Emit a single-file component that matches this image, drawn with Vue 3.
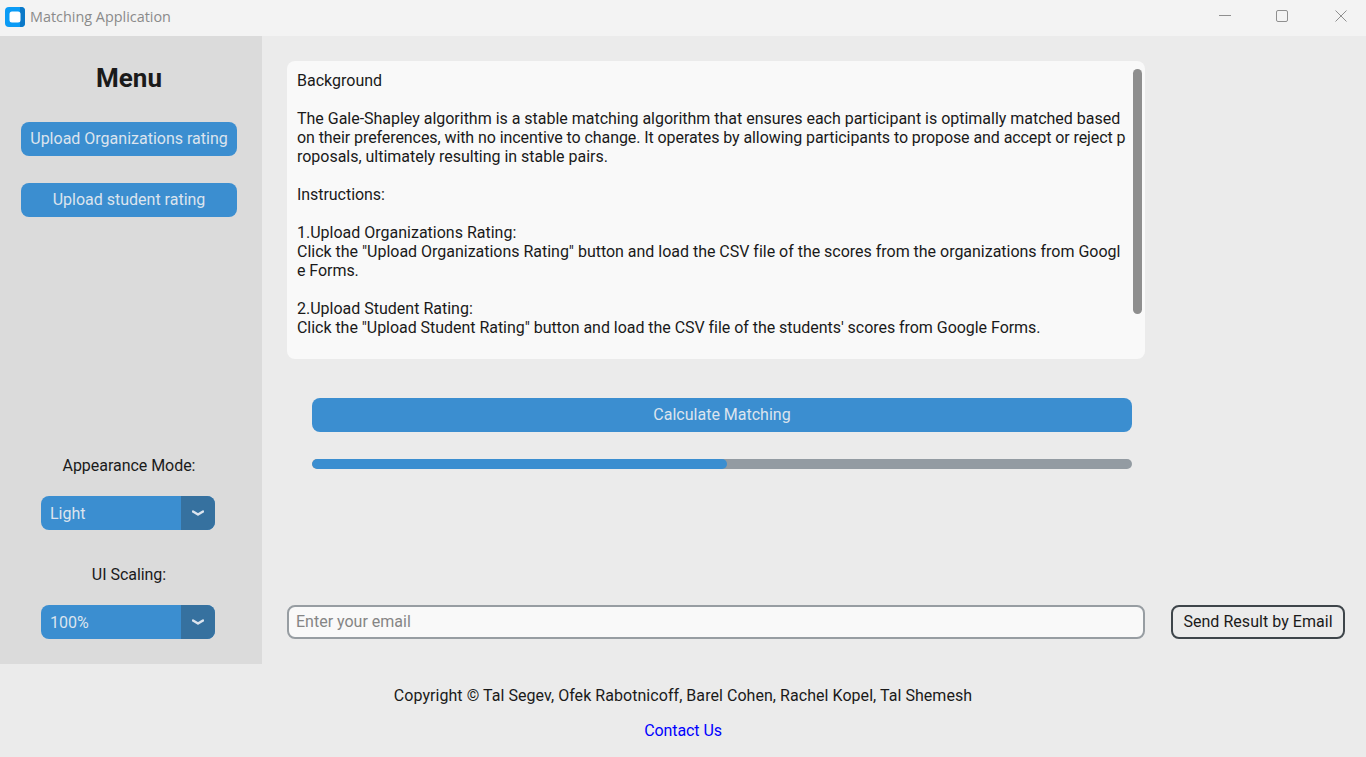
<script setup>
const lines = [
  { text: 'Background', spacing: 0 },
  { text: '', spacing: 0 },
  { text: 'The Gale-Shapley algorithm is a stable matching algorithm that ensures each participant is optimally matched based', spacing: -0.017 },
  { text: 'on their preferences, with no incentive to change. It operates by allowing participants to propose and accept or reject p', spacing: -0.078 },
  { text: 'roposals, ultimately resulting in stable pairs.', spacing: -0.02 },
  { text: '', spacing: 0 },
  { text: 'Instructions:', spacing: -0.05 },
  { text: '', spacing: 0 },
  { text: '1.Upload Organizations Rating:', spacing: 0 },
  { text: 'Click the "Upload Organizations Rating" button and load the CSV file of the scores from the organizations from Googl', spacing: -0.017 },
  { text: 'e Forms.', spacing: -0.05 },
  { text: '', spacing: 0 },
  { text: '2.Upload Student Rating:', spacing: 0 },
  { text: 'Click the "Upload Student Rating" button and load the CSV file of the students\' scores from Google Forms.', spacing: -0.04 },
]
const menus = [
  { label: 'Appearance Mode:', value: 'Light' },
  { label: 'UI Scaling:', value: '100%' },
]
</script>

<template>
  <div class="window">
    <header class="titlebar">
      <svg class="logo" width="20" height="20" viewBox="0 0 20 20">
        <rect width="20" height="20" rx="4" fill="#0a9bf5" />
        <path d="M15 0h1a4 4 0 0 1 4 4v12a4 4 0 0 1-4 4h-1z" fill="#0a78c8" />
        <rect x="4.500" y="4.500" width="11" height="11" rx="2.500" fill="#fff" />
      </svg>
      <span class="app-title">Matching Application</span>
      <div class="controls">
        <svg width="12" height="12" viewBox="0 0 12 12"><path d="M0 5.500h12" stroke="#8f8f8f" fill="none" /></svg>
        <svg width="12" height="12" viewBox="0 0 12 12"><rect x=".5" y=".5" width="11" height="11" rx="1.500" stroke="#8f8f8f" fill="none" /></svg>
        <svg width="12" height="12" viewBox="0 0 12 12"><path d="M.5.5l11 11M11.500.5l-11 11" stroke="#8f8f8f" fill="none" /></svg>
      </div>
    </header>

    <div class="content">
      <aside class="sidebar">
        <h1 class="menu-title">Menu</h1>
        <button class="btn side-btn first"><span class="nudge">Upload Organizations rating</span></button>
        <button class="btn side-btn second"><span class="nudge">Upload student rating</span></button>
        <div class="settings">
          <div v-for="m in menus" :key="m.label" class="setting">
            <div class="setting-label">{{ m.label }}</div>
            <div class="option-menu">
              <span class="option-value">{{ m.value }}</span>
              <span class="option-arrow">
                <svg width="12" height="7" viewBox="0 0 12 7"><path d="M1 1.500l5 3 5-3" stroke="#dce4ee" stroke-width="2.500" fill="none" stroke-linecap="round" stroke-linejoin="round" /></svg>
              </span>
            </div>
          </div>
        </div>
      </aside>

      <main class="main">
        <div class="textbox">
          <div class="text"><div v-for="(l, i) in lines" :key="i" class="line" :style="{ letterSpacing: l.spacing + 'px' }">{{ l.text }}</div></div>
          <div class="scroll-thumb"></div>
        </div>
        <button class="btn calc"><span class="nudge">Calculate Matching</span></button>
        <div class="progress"><div class="progress-fill"></div></div>
        <div class="email-row">
          <div class="email-input">Enter your email</div>
          <button class="send"><span class="nudge send-label">Send Result by Email</span></button>
        </div>
      </main>
    </div>

    <footer class="footer">
      <div class="copyright">Copyright © Tal Segev, Ofek Rabotnicoff, Barel Cohen, Rachel Kopel, Tal Shemesh</div>
      <div class="contact">Contact Us</div>
    </footer>
  </div>
</template>

<style scoped>
.window {
  width: 1366px;
  height: 757px;
  display: flex;
  flex-direction: column;
  overflow: hidden;
  background: #ebebeb;
  font-family: Roboto, sans-serif;
  font-size: 16px;
  line-height: 19px;
  color: #1a1a1a;
}
.titlebar {
  height: 36px;
  flex: none;
  display: flex;
  align-items: center;
  padding: 0 19px 4px 5px;
  box-sizing: border-box;
  background: #f3f3f3;
}
.logo { margin-top: 2px; }
.app-title {
  margin-left: 5px;
  font-family: "Open Sans", sans-serif;
  font-size: 14.4px;
  color: #8a8a8a;
}
.controls {
  margin-left: auto;
  display: flex;
  gap: 46px;
}
.controls svg:nth-child(1), .controls svg:nth-child(2) { margin-left: -1px; }
.controls svg:nth-child(2) { margin-right: 1px; }
.content {
  height: 628px;
  flex: none;
  display: flex;
}
.sidebar {
  width: 262px;
  flex: none;
  box-sizing: border-box;
  padding: 27px 4px 25px 0;
  display: flex;
  flex-direction: column;
  align-items: center;
  background: #dbdbdb;
}
.menu-title {
  margin: 0;
  font-size: 26px;
  line-height: 30px;
  font-weight: 700;
}
.btn {
  display: block;
  height: 34px;
  padding: 0;
  border: 0;
  border-radius: 8px;
  background: #3b8ed0;
  color: #dce4ee;
  font: inherit;
}
.nudge {
  display: block;
  margin-top: -1px;
}
.side-btn { width: 216px; }
.first { margin-top: 29px; }
.second { margin-top: 27px; }
.settings {
  margin-top: auto;
  display: flex;
  flex-direction: column;
  align-items: center;
  gap: 35px;
}
.setting {
  display: flex;
  flex-direction: column;
  align-items: center;
  gap: 21px;
}
.setting-label { letter-spacing: -0.04px; }
.option-menu {
  width: 174px;
  height: 34px;
  margin-right: 2px;
  display: flex;
  border-radius: 8px;
  overflow: hidden;
  background: #3b8ed0;
  color: #dce4ee;
}
.option-value {
  flex: 1;
  padding: 1px 0 0 9px;
  line-height: 34px;
}
.option-arrow {
  width: 34px;
  display: flex;
  align-items: center;
  justify-content: center;
  background: #36719f;
}
.main {
  flex: 1;
  box-sizing: border-box;
  padding: 25px 21px 25px 25px;
  display: flex;
  flex-direction: column;
  align-items: flex-start;
}
.textbox {
  position: relative;
  width: 858px;
  height: 298px;
  box-sizing: border-box;
  padding: 10px;
  border-radius: 8px;
  background: #f9f9f9;
}
.line {
  height: 19px;
  white-space: pre;
}
.scroll-thumb {
  position: absolute;
  top: 8px;
  right: 3px;
  width: 9px;
  height: 245px;
  border-radius: 5px;
  background: #8e8e8e;
}
.calc {
  width: 820px;
  margin: 39px 0 0 25px;
}
.progress {
  width: 820px;
  height: 10px;
  margin: 27px 0 0 25px;
  border-radius: 5px;
  overflow: hidden;
  background: #939ba2;
}
.progress-fill {
  width: 415px;
  height: 100%;
  border-radius: 5px;
  background: #3b8ed0;
}
.email-row {
  margin-top: auto;
  display: flex;
  gap: 26px;
}
.email-input {
  width: 858px;
  height: 34px;
  box-sizing: border-box;
  padding-left: 7px;
  border: 2px solid #979da2;
  border-radius: 8px;
  background: #f9f9f9;
  color: #858585;
  line-height: 30px;
}
.send {
  width: 174px;
  height: 34px;
  padding: 0;
  border: 2px solid #3e454a;
  border-radius: 8px;
  background: transparent;
  color: #1a1a1a;
  font: inherit;
}
.send-label { letter-spacing: 0.04px; }
.footer {
  flex: 1;
  display: flex;
  flex-direction: column;
  align-items: center;
  padding-top: 22px;
  gap: 16px;
}
.copyright {
  line-height: 19px;
  letter-spacing: 0.05px;
}
.contact {
  color: #0000ff;
  letter-spacing: -0.08px;
}
</style>
